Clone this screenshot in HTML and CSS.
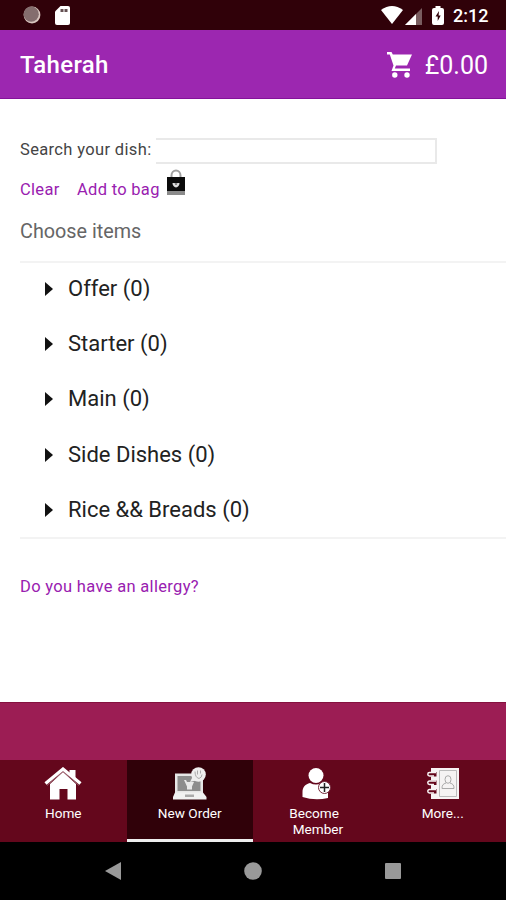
FILE: index.html
```
<!DOCTYPE html>
<html lang="en">

<head>
    <meta charset="UTF-8">
    <meta name="viewport" content="width=device-width, initial-scale=1.0">
    <title>Taherah - New Order</title>
    <link rel="stylesheet" href="styles.css">
</head>

<body>
    <div class="status-bar">
        <div class="status-left">
            <svg width="18" height="18" viewBox="0 0 18 18">
                <circle cx="9" cy="9" r="8.4" fill="#d9c6c0"/>
                <circle cx="8.2" cy="8.2" r="7.6" fill="#846d6e"/>
            </svg>
            <svg width="15" height="19" viewBox="0 0 15 19">
                <path d="M5.5 0H13a2 2 0 0 1 2 2v15a2 2 0 0 1-2 2H2a2 2 0 0 1-2-2V5.5z" fill="#fff"/>
                <path d="M5.500 3h3v3h-3zM9.500 3h3v3h-3z" fill="#645052"/>
            </svg>
        </div>
        <div class="status-right">
            <svg class="wifi" width="22" height="18" viewBox="0 0 22 18">
                <path d="M0 4Q11-4 22 4L11 18z" fill="#fff"/>
            </svg>
            <svg class="signal" width="17" height="17" viewBox="0 0 17 17">
                <path d="M17 0v17H0z" fill="#795d60"/>
                <path d="M11 6v11H0z" fill="#fff"/>
            </svg>
            <svg class="battery" width="12" height="19" viewBox="0 0 12 19">
                <path d="M3.500 0h5v2H10a2 2 0 0 1 2 2v13a2 2 0 0 1-2 2H2a2 2 0 0 1-2-2V4a2 2 0 0 1 2-2h1.500z" fill="#fff"/>
                <path d="M7 5l-3.500 5.500h2.200V15L8.700 9.500H6.600z" fill="#300109"/>
            </svg>
            <span class="time">2:12</span>
        </div>
    </div>

    <header class="header">
        <h1>Taherah</h1>
        <div class="cart">
            <svg width="25" height="26" viewBox="0 0 25 26">
                <path d="M0 0h4.500l1.300 2.500H25L20 13.500H9L7.800 16.500H23V19H4.500L6.500 13.500 2.800 2.500H0z" fill="#fff"/>
                <circle cx="7.800" cy="23" r="2.700" fill="#fff"/>
                <circle cx="20" cy="23" r="2.700" fill="#fff"/>
            </svg>
            <span>£0.00</span>
        </div>
    </header>

    <main class="content">
        <div class="search">
            <label for="dish">Search your dish:</label>
            <input type="text" id="dish">
        </div>
        <div class="actions">
            <a href="#" class="clear">Clear</a>
            <a href="#" class="add">Add to bag</a>
            <svg width="20" height="28" viewBox="0 0 20 28">
                <path d="M5.500 10V6.500a4.500 5 0 0 1 9 0V10" fill="none" stroke="#a0a0a0" stroke-width="2"/>
                <path d="M1 8h18v14H1z" fill="#0b0b0b"/>
                <path d="M1 22h18v4H1z" fill="#8b8b8b"/>
                <path d="M6.500 14h7c0 2.500-1.500 4-3.500 4.500-2-.5-3.500-2-3.500-4.500z" fill="#ddd"/>
                <path d="M8.500 14.500h3L10 16z" fill="#333"/>
            </svg>
        </div>
        <p class="choose">Choose items</p>
        <ul class="menu">
            <li>Offer (0)</li>
            <li>Starter (0)</li>
            <li>Main (0)</li>
            <li>Side Dishes (0)</li>
            <li>Rice &amp;&amp; Breads (0)</li>
        </ul>
        <a href="#" class="allergy">Do you have an allergy?</a>
    </main>

    <div class="band"></div>

    <nav class="tabs">
        <a href="#" class="tab">
            <svg width="38" height="33" viewBox="0 0 38 33">
                <path d="M6 17L19 5l13 12v15.500h-8.500V22h-8v10.500H6z" fill="#fff"/>
                <path d="M3 18.500L19 4.500l16 14" fill="none" stroke="#a8707c" stroke-width=".8"/>
                <path d="M1.500 16.500L19 2l17.500 14.500" fill="none" stroke="#fff" stroke-width="3.200"/>
                <path d="M25.500 3h6v9l-6-5z" fill="#fff"/>
            </svg>
            <span>Home</span>
        </a>
        <a href="#" class="tab active">
            <svg width="34" height="33" viewBox="0 0 34 33">
                <path d="M2 6.500h28v20H2z" fill="#e6e6e6"/>
                <path d="M4.500 9h23v15h-23z" fill="#8d8d8d"/>
                <path d="M11 13h2l1 2h7l-2 4.500v3h-5v-3z" fill="#e9e9e9"/>
                <path d="M2 25.500h28l3.500 4.500v2.500H0V30z" fill="#f1f1f1"/>
                <path d="M12 27.500h9V30h-9z" fill="#aaa"/>
                <path d="M20 9l-3 6 8-2z" fill="#eee"/>
                <circle cx="25.500" cy="7.500" r="7.300" fill="#eee"/>
                <path d="M22 4.500q0 6 4 7 3-1 3-4M24.500 3.500v4M27.500 3.500v3" fill="none" stroke="#aaa"/>
            </svg>
            <span>New Order</span>
        </a>
        <a href="#" class="tab member">
            <svg width="30" height="33" viewBox="0 0 30 33">
                <ellipse cx="15" cy="8.500" rx="7.500" ry="7.500" fill="#fff"/>
                <path d="M1.500 30v-5c0-5 3-8 7.500-9 4 2 8 2 12 0 4 1 6 4 6 8v7q-13 3-25.500-1z" fill="#fff"/>
                <circle cx="23.500" cy="20.500" r="6" fill="#fff" stroke="#75283a"/>
                <path d="M23.500 16v9M19 20.500h9" stroke="#222" stroke-width="1.500"/>
            </svg>
            <span>Become<br>&nbsp;Member</span>
        </a>
        <a href="#" class="tab">
            <svg width="32" height="33" viewBox="0 0 32 33">
                <path d="M4 1h28v31H4z" fill="#f7f3f4"/>
                <path d="M12.500 3.500h17v26h-17z" fill="#f5f3f3" stroke="#bbb"/>
                <path d="M3 5h6.500v4.500H3zM3 13.500h6.500V18H3zM3 22h6.500v4.500H3z" fill="#64071c"/>
                <path d="M9 5.500H2.500a1.700 1.700 0 0 0 0 3.400H7M9 14H2.500a1.700 1.700 0 0 0 0 3.400H7M9 22.500H2.500a1.700 1.700 0 0 0 0 3.400H7" fill="none" stroke="#f7f3f4" stroke-width="1.500"/>
                <ellipse cx="21" cy="12.500" rx="3" ry="3.800" fill="none" stroke="#aaa"/>
                <path d="M19 16c-3 1-4 2-4 5.500h12c0-3.500-1-4.500-4-5.500" fill="none" stroke="#aaa"/>
            </svg>
            <span>More...</span>
        </a>
    </nav>

    <div class="system-nav">
        <svg width="16" height="18" viewBox="0 0 16 18"><path d="M0 9L16 0v18z"/></svg>
        <svg width="18" height="18" viewBox="0 0 18 18"><circle cx="9" cy="9" r="8.800"/></svg>
        <svg width="16" height="16" viewBox="0 0 16 16"><rect width="16" height="16" rx="1"/></svg>
    </div>
</body>

</html>
```

FILE: styles.css
```
* {
    box-sizing: border-box;
}

body {
    font-family: Roboto, Arial, sans-serif;
    margin: 0;
    height: 900px;
    display: flex;
    flex-direction: column;
    background-color: #fff;
    overflow: hidden;
}

a {
    color: #9920b0;
    text-decoration: none;
}

svg {
    display: block;
    flex: none;
}

.status-bar {
    height: 30px;
    display: flex;
    justify-content: space-between;
    align-items: center;
    padding: 0 18px 0 23px;
    background-color: #300109;
    color: #fff;
}

.status-left,
.status-right {
    display: flex;
    align-items: center;
}

.status-left {
    gap: 14px;
}

.signal {
    margin: 2px 10px 0 2px;
}

.battery {
    margin-right: 9px;
}

.time {
    width: 35px;
    padding-top: 1px;
    font-size: 18px;
    font-weight: 500;
    white-space: nowrap;
}

.header {
    height: 69px;
    display: flex;
    justify-content: space-between;
    align-items: center;
    padding: 2px 18px 0 20px;
    background-color: #9c27b0;
    border-bottom: 1px solid #84129a;
    color: #fff;
}

.header h1 {
    margin: 0;
    font-size: 24px;
    font-weight: 500;
    letter-spacing: 0.3px;
}

.cart {
    display: flex;
    align-items: center;
    gap: 13px;
    font-size: 25px;
}

.content {
    height: 603px;
    padding: 39px 0 0 20px;
    color: #444;
}

.search {
    display: flex;
    align-items: center;
    height: 26px;
    font-size: 16.5px;
    letter-spacing: 0.35px;
}

.search label {
    width: 136px;
    white-space: nowrap;
    padding-bottom: 3px;
}

.search input {
    width: 281px;
    height: 26px;
    padding: 0 4px;
    border: 2px solid #e9e9e9;
    border-left-width: 0;
    background-color: #fff;
}

.actions {
    display: flex;
    align-items: center;
    height: 28px;
    margin-top: 5px;
    font-size: 16.5px;
    letter-spacing: 0.3px;
}

.actions a {
    padding-top: 12px;
}

.clear {
    width: 57px;
}

.add {
    width: 89px;
    white-space: nowrap;
}

.choose {
    margin: 23px 0 0;
    font-size: 19.8px;
    line-height: 24px;
    color: #666;
}

.menu {
    list-style: none;
    margin: 17px 0 0;
    padding: 0 0 0 25px;
    height: 278px;
    border-top: 2px solid #f3f3f3;
    border-bottom: 2px solid #f3f3f3;
    color: #222;
    font-size: 22px;
}

.menu li {
    display: flex;
    align-items: center;
    height: 55.4px;
    padding-bottom: 5px;
}

.menu li::before {
    content: "";
    margin: 1px 15px 0 0;
    border: 7px solid transparent;
    border-left: 8px solid #111;
    border-right-width: 0;
}

.allergy {
    display: block;
    margin-top: 38px;
    font-size: 16.5px;
    line-height: 20px;
    letter-spacing: 0.32px;
}

.band {
    height: 58px;
    background-color: #9c1d54;
    border-top: 1px solid #85113f;
}

.tabs {
    display: grid;
    grid-template-columns: repeat(4, 1fr);
    height: 82px;
    background-color: #64071c;
}

.tab {
    display: flex;
    flex-direction: column;
    align-items: center;
    padding-top: 7px;
    color: #fff;
    font-size: 13.6px;
    line-height: 16px;
}

.tab svg {
    margin-bottom: 5px;
}

.active {
    background-color: #300109;
    border-bottom: 3px solid #eee;
}

.system-nav {
    display: flex;
    align-items: center;
    justify-content: space-between;
    height: 58px;
    padding: 0 105px;
    background-color: #000;
    fill: #999;
}
```
